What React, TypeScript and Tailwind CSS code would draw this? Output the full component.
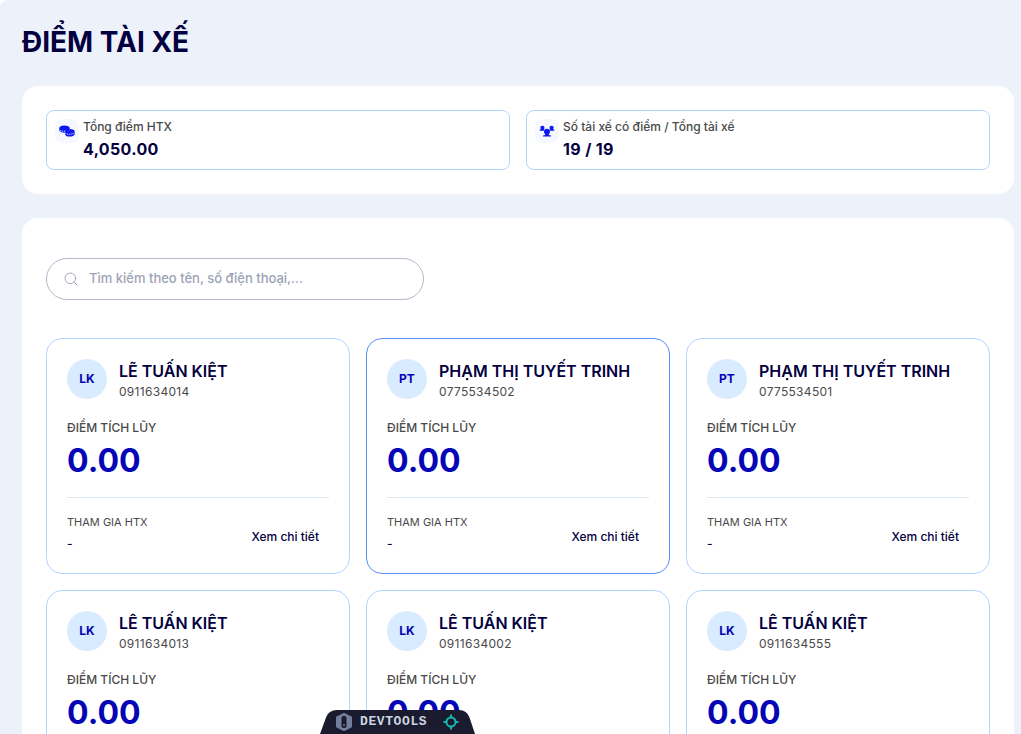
import { Search } from "lucide-react";

const drivers = [
  { initials: "LK", name: "LẼ TUẤN KIỆT", phone: "0911634014", points: "0.00" },
  { initials: "PT", name: "PHẠM THỊ TUYẾT TRINH", phone: "0775534502", points: "0.00", active: true },
  { initials: "PT", name: "PHẠM THỊ TUYẾT TRINH", phone: "0775534501", points: "0.00" },
  { initials: "LK", name: "LÊ TUẤN KIỆT", phone: "0911634013", points: "0.00" },
  { initials: "LK", name: "LÊ TUẤN KIỆT", phone: "0911634002", points: "0.00" },
  { initials: "LK", name: "LÊ TUẤN KIỆT", phone: "0911634555", points: "0.00" },
];

type Driver = (typeof drivers)[number];

function CoinsIcon() {
  return (
    <svg width="16" height="16" viewBox="0 0 16 16" fill="none">
      <path d="M5.2 2.6C2.3 2.6.2 3.8.2 5.4v1.4c0 1.6 2.1 2.9 5 2.9 3.2 0 5.6-1.4 5.6-3.3V5.3c0-1.6-2.4-2.7-5.6-2.7Z" fill="#0b18ee" />
      <path d="M10.8 6.1c2.9 0 4.9 1.1 4.9 2.6v2c0 1.7-2 2.9-4.9 2.9-2.8 0-4.8-1-4.8-2.6V9.3c2.5 0 4.5-1.1 4.8-3.2Z" fill="#0b18ee" />
      <path d="M.8 7.1c1.2 1.2 4 1.6 6.2.9M6.2 10.1c1.4 1.5 6.2 1.7 9.1-.2" stroke="#f4f7ff" strokeWidth=".8" strokeDasharray="1.4 .7" />
    </svg>
  );
}

function PeopleIcon() {
  return (
    <svg width="16" height="16" viewBox="0 0 16 16" fill="#0b18ee">
      <path d="M3.5 2.7c1.3 0 2 .9 1.9 2.2l-.4 2H5v.8H.7v-.8L1.8 6l-.4-1.4c-.1-1.2.8-1.9 2.1-1.9ZM12.5 2.7c-1.3 0-2 .9-1.9 2.2l.4 2h0v.8h4.3v-.8L14.2 6l.4-1.4c.1-1.2-.8-1.9-2.1-1.9Z" />
      <path d="M8 5.8c1.9 0 3 1.1 3 2.7 0 1.2-.4 2-1.2 2.7v.7l2.2.7v1H4v-1l2.2-.7v-.7C5.4 10.500 5 9.700 5 8.500c0-1.600 1.100-2.700 3-2.700Z" />
    </svg>
  );
}

function StatCard({ icon, label, value }: { icon: React.ReactNode; label: string; value: string }) {
  return (
    <div className="flex h-[60px] gap-1 rounded-lg border border-[#b3d4ff] p-2">
      <div className="flex size-6 items-center justify-center rounded-lg bg-[#f5f8ff]">{icon}</div>
      <div>
        <p className="text-xs leading-4 font-medium text-[#4a4a4a]">{label}</p>
        <p className="mt-0.5 text-base leading-6 font-bold tracking-[0.35px] text-[#030040]">{value}</p>
      </div>
    </div>
  );
}

function DriverCard({ driver }: { driver: Driver }) {
  return (
    <div className={`h-[236px] rounded-2xl border p-5 ${driver.active ? "border-[#5990f8]" : "border-[#b3d4ff]"}`}>
      <div className="flex gap-3">
        <div className="flex size-10 shrink-0 items-center justify-center rounded-full bg-[#d9ebff] text-xs font-bold text-[#0505b5]">
          {driver.initials}
        </div>
        <div>
          <h3 className="text-base leading-6 font-semibold whitespace-nowrap text-[#030040]">{driver.name}</h3>
          <p className="text-xs leading-[18px] tracking-[0.3px] text-[#4a4a4a]">{driver.phone}</p>
        </div>
      </div>
      <p className="mt-[19px] text-xs leading-4 font-medium text-[#4a4a4a]">ĐIỂM TÍCH LŨY</p>
      <p className="mt-1 text-[32px] leading-[42px] font-bold text-[#0505b5]">{driver.points}</p>
      <div className="mt-[15px] flex justify-between border-t border-[#dce8f2] pt-4">
        <div>
          <p className="text-[11px] leading-4 text-[#4a4a4a]">THAM GIA HTX</p>
          <p className="mt-1 text-xs leading-5 font-medium text-[#030040]">-</p>
        </div>
        <button className="mt-[13px] h-5 px-2.5 text-xs font-medium text-[#030040]">Xem chi tiết</button>
      </div>
    </div>
  );
}

function DevtoolsTab() {
  return (
    <div className="absolute top-[710px] left-[320px] h-6 w-[156px]">
      <svg className="absolute inset-0" width="156" height="24" viewBox="0 0 156 24" fill="none">
        <path d="M0 24 6 7.500Q8.500 0 17 0H139Q147 0 149.500 7.500L155 24Z" fill="#1b1b2f" />
        <path d="m24 4 7 3.500v9L24 20l-7-3.500v-9Z" fill="#737d9c" stroke="#737d9c" strokeWidth="2" strokeLinejoin="round" />
        <rect x="21.500" y="6" width="5" height="12" rx="2" fill="#1b1b2f" />
        <path d="M24 14v2" stroke="#737d9c" strokeWidth="1.500" />
        <circle cx="131" cy="12" r="4.500" stroke="#14b8ae" strokeWidth="2" />
        <path d="M131 4.500v3M131 16.500v3M123.500 12h3M135.500 12h3" stroke="#14b8ae" strokeWidth="2" />
      </svg>
      <span className="absolute top-1 left-10 font-['Liberation_Mono',monospace] text-[13px] leading-4 font-bold tracking-[0.6px] text-[#cbd5e1]">
        DEVTOOLS
      </span>
    </div>
  );
}

export default function App() {
  return (
    <div className="relative h-[734px] w-[1021px] overflow-hidden bg-white font-[Inter,sans-serif]">
      <main className="h-full rounded-tl-lg bg-[#edf2fa] pr-[7px] pl-[22px]">
        <h1 className="pt-[21px] text-[28px] leading-[42px] font-bold text-[#030040]">ĐIỂM TÀI XẾ</h1>

        <section className="mt-[23px] grid h-[108px] grid-cols-2 gap-4 rounded-2xl bg-white p-6">
          <StatCard icon={<CoinsIcon />} label="Tổng điểm HTX" value="4,050.00" />
          <StatCard icon={<PeopleIcon />} label="Số tài xế có điểm / Tổng tài xế" value="19 / 19" />
        </section>

        <section className="mt-6 rounded-2xl bg-white px-6 pt-10">
          <label className="flex h-[42px] w-[378px] items-center gap-2.5 rounded-full border border-[#b0bacb] px-4 text-[#9ca3b4]">
            <Search size={16} strokeWidth={1.4} className="shrink-0" />
            <input
              className="w-full bg-transparent text-[13px] font-medium outline-none placeholder:text-[#9ca3b4]"
              placeholder="Tìm kiếm theo tên, số điện thoại,..."
            />
          </label>

          <div className="mt-[38px] grid grid-cols-3 gap-4">
            {drivers.map((driver) => (
              <DriverCard key={driver.phone} driver={driver} />
            ))}
          </div>
        </section>
      </main>
      <DevtoolsTab />
    </div>
  );
}
